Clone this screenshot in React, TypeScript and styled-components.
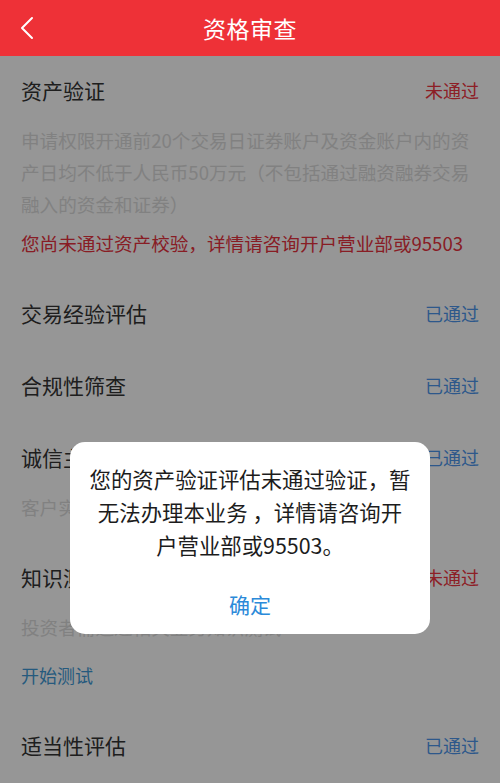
import React from 'react'
import styled, { createGlobalStyle } from 'styled-components'

const GlobalStyle = createGlobalStyle`
  html, body {
    margin: 0;
    padding: 0;
    background: #fff;
  }
  body {
    font-family: 'Noto Sans CJK SC', 'Noto Sans', sans-serif;
    -webkit-font-smoothing: antialiased;
  }
`

const Page = styled.div`
  width: 500px;
  height: 783px;
  overflow: hidden;
  display: flex;
  flex-direction: column;
  background: #fff;
`

const Header = styled.header`
  height: 56px;
  flex-shrink: 0;
  background: #ee3137;
  display: flex;
  align-items: center;
  justify-content: center;
  position: relative;
`

const BackButton = styled.button`
  position: absolute;
  left: 12px;
  top: 10px;
  width: 30px;
  height: 36px;
  padding: 0;
  border: none;
  background: transparent;
  display: flex;
  align-items: center;
  justify-content: center;
`

const Title = styled.h1`
  margin: 0;
  color: #fff;
  font-size: 23px;
  font-weight: 400;
  letter-spacing: 0.5px;
`

const Content = styled.main`
  flex: 1;
  position: relative;
`

const Section = styled.section<{ $compact?: boolean }>`
  padding: 21px 21px ${(p) => (p.$compact ? 18 : 21)}px;

  &:first-child {
    padding-top: 19px;
  }
`

const Row = styled.div`
  display: flex;
  align-items: center;
  justify-content: space-between;
  height: 30px;
`

const ItemName = styled.span`
  color: #333;
  font-size: 21px;
  line-height: 30px;
`

const Status = styled.span<{ $passed?: boolean }>`
  color: ${(p) => (p.$passed ? '#4d96ec' : '#f03541')};
  font-size: 18px;
  line-height: 30px;
`

const Desc = styled.p`
  margin: 19px 0 0;
  color: #dcdcdc;
  font-size: 18.6px;
  line-height: 32px;
`

const Warning = styled.p`
  margin: 7px 0 0;
  color: #e8323e;
  font-size: 18.6px;
  line-height: 32px;
`

const TestLink = styled.a`
  display: block;
  margin-top: 16px;
  color: #3f9ad6;
  font-size: 18px;
  line-height: 32px;
  text-decoration: none;
`

const Mask = styled.div`
  position: absolute;
  inset: 0;
  background: rgba(0, 0, 0, 0.41);
`

const Dialog = styled.div`
  position: absolute;
  left: 70px;
  top: 386px;
  width: 360px;
  background: #fff;
  border-radius: 15px;
  display: flex;
  flex-direction: column;
  align-items: center;
`

const DialogText = styled.p`
  margin: 0;
  padding: 20px 16px 0;
  color: #1c1c1c;
  font-size: 21.4px;
  line-height: 33px;
  text-align: center;
`

const ConfirmButton = styled.button`
  margin-top: 15px;
  width: 100%;
  padding: 13px 0 15px;
  border: none;
  background: transparent;
  color: #2b8ad9;
  font-family: inherit;
  font-size: 21px;
  line-height: 30px;
`

function BackIcon() {
  return (
    <svg width='16' height='24' viewBox='0 0 16 24' fill='none'>
      <path d='M13 2 L3 12 L13 22' stroke='#fff' strokeWidth='2' strokeLinecap='round' strokeLinejoin='round' />
    </svg>
  )
}

export default function App() {
  return (
    <Page>
      <GlobalStyle />
      <Header>
        <BackButton aria-label='返回'>
          <BackIcon />
        </BackButton>
        <Title>资格审查</Title>
      </Header>
      <Content>
        <Section $compact>
          <Row>
            <ItemName>资产验证</ItemName>
            <Status>未通过</Status>
          </Row>
          <Desc>申请权限开通前20个交易日证券账户及资金账户内的资产日均不低于人民币50万元（不包括通过融资融券交易融入的资金和证券）</Desc>
          <Warning>您尚未通过资产校验，详情请咨询开户营业部或95503</Warning>
        </Section>
        <Section>
          <Row>
            <ItemName>交易经验评估</ItemName>
            <Status $passed>已通过</Status>
          </Row>
        </Section>
        <Section>
          <Row>
            <ItemName>合规性筛查</ItemName>
            <Status $passed>已通过</Status>
          </Row>
        </Section>
        <Section $compact>
          <Row>
            <ItemName>诚信主体资格审查</ItemName>
            <Status $passed>已通过</Status>
          </Row>
          <Desc>客户实名信息需真实有效</Desc>
        </Section>
        <Section $compact>
          <Row>
            <ItemName>知识测评</ItemName>
            <Status>未通过</Status>
          </Row>
          <Desc>投资者需通过相关业务知识测试</Desc>
          <TestLink>开始测试</TestLink>
        </Section>
        <Section>
          <Row>
            <ItemName>适当性评估</ItemName>
            <Status $passed>已通过</Status>
          </Row>
        </Section>

        <Mask />
        <Dialog role='dialog'>
          <DialogText>
            您的资产验证评估末通过验证，暂
            <br />
            无法办理本业务 ，详情请咨询开
            <br />
            户营业部或95503。
          </DialogText>
          <ConfirmButton>确定</ConfirmButton>
        </Dialog>
      </Content>
    </Page>
  )
}
